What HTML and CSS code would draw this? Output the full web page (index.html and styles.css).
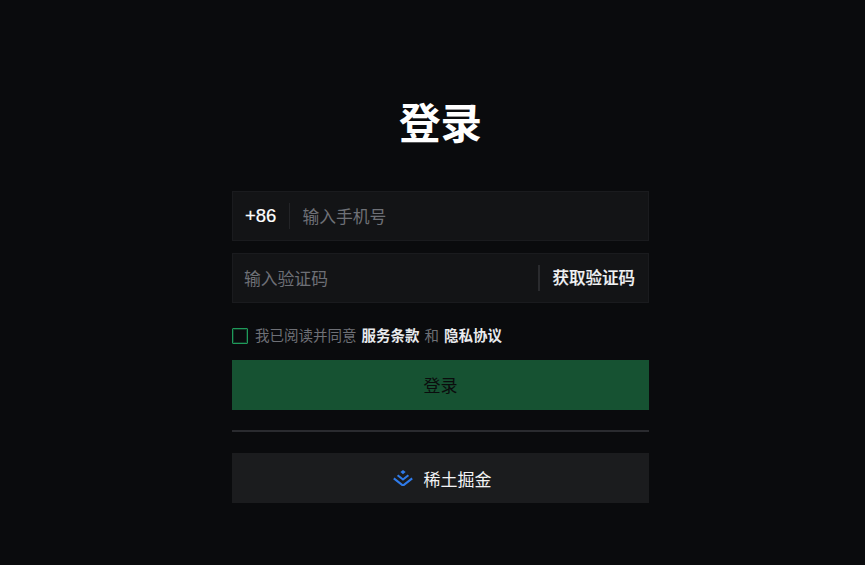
FILE: index.html
```html
<!DOCTYPE html>
<html lang="zh-CN">
<head>
    <meta charset="UTF-8">
    <meta name="viewport" content="width=device-width, initial-scale=1.0">
    <title>登录</title>
    <link rel="stylesheet" href="styles.css">
</head>
<body>
    <div class="container">
        <h1>登录</h1>
        <div class="field">
            <span class="prefix">+86</span>
            <span class="divider"></span>
            <input class="phone-input" type="text" placeholder="输入手机号">
        </div>
        <div class="field code-field">
            <input class="code-input" type="text" placeholder="输入验证码">
            <span class="divider tall"></span>
            <button class="code-button" type="button">获取验证码</button>
        </div>
        <label class="agree">
            <span class="checkbox"></span>
            <span class="agree-text">我已阅读并同意 <a href="#">服务条款</a> 和 <a href="#">隐私协议</a></span>
        </label>
        <button class="login-button" type="button">登录</button>
        <hr class="line">
        <button class="juejin-button" type="button">
            <svg class="juejin-logo" width="20" height="16" viewBox="0 0 20 16" fill="none">
                <path d="M10 0 L12.6 2.1 L10 4.2 L7.4 2.1 Z" fill="#2f7bea"/>
                <path d="M4.6 5.2 L10 9.5 L15.4 5.2" stroke="#2f7bea" stroke-width="2.1"/>
                <path d="M0.8 8.4 L10 15.6 L19.2 8.4" stroke="#2f7bea" stroke-width="2.1"/>
            </svg>
            <span>稀土掘金</span>
        </button>
    </div>
</body>
</html>
```

FILE: styles.css
```css
* {
    box-sizing: border-box;
}

body {
    margin: 0;
    height: 565px;
    overflow: hidden;
    background-color: #0a0b0d;
    font-family: "Liberation Sans", "Noto Sans CJK SC", sans-serif;
    color: #fff;
}

.container {
    width: 417px;
    margin-left: 232px;
    padding-top: 99px;
    display: flex;
    flex-direction: column;
}

h1 {
    margin: 0 0 40px;
    height: 52px;
    line-height: 52px;
    font-size: 41.5px;
    font-weight: 700;
    text-align: center;
}

.field {
    display: flex;
    align-items: center;
    height: 50px;
    margin-bottom: 12px;
    padding: 0 13px 0 12px;
    background-color: #131416;
    border: 1px solid #1a1b1e;
}

.prefix {
    margin-right: 13px;
    margin-bottom: 1px;
    font-size: 18.5px;
    font-weight: 500;
    line-height: 22px;
    -webkit-text-stroke: 0.2px #fff;
}

.divider {
    width: 1px;
    height: 26px;
    background-color: #232427;
}

.divider.tall {
    width: 2px;
    background-color: #2a2b2e;
}

input {
    flex: 1;
    min-width: 0;
    padding: 4px 0 0;
    background: transparent;
    border: none;
    outline: none;
    font-family: inherit;
    font-size: 16.8px;
    color: #fff;
}

input::placeholder {
    color: #6e7076;
    opacity: 1;
}

.phone-input {
    margin-left: 12px;
}

.code-field {
    padding-left: 11px;
}

.code-button {
    margin: 0 0 2px 13px;
    padding: 0;
    background: none;
    border: none;
    font-family: inherit;
    font-size: 16.5px;
    font-weight: 500;
    color: #f2f3f5;
    -webkit-text-stroke: 0.2px #f2f3f5;
}

.agree {
    display: flex;
    align-items: center;
    gap: 7px;
    height: 16px;
    margin: 13px 0 16px;
    font-size: 14.5px;
    color: #6e7076;
}

.agree-text {
    margin-bottom: 3px;
}

.agree a {
    margin: 0 1px;
    color: #e8eaed;
    font-weight: 700;
    text-decoration: none;
}

.checkbox {
    width: 16px;
    height: 16px;
    border: 1px solid #1f9a5a;
    border-radius: 1px;
    box-shadow: inset 0 0 0 1px rgba(31, 154, 90, 0.3);
}

.login-button {
    height: 50px;
    padding: 0 0 2px;
    background-color: #165232;
    border: none;
    font-family: inherit;
    font-size: 17px;
    color: #0b0c0d;
}

.line {
    width: 100%;
    height: 2px;
    margin: 20px 0 21px;
    border: none;
    background-color: #2a2b2f;
}

.juejin-button {
    display: flex;
    align-items: center;
    justify-content: center;
    gap: 11px;
    height: 50px;
    padding: 0 0 0 3px;
    background-color: #1b1c1e;
    border: none;
    font-family: inherit;
    font-size: 17px;
    color: #f2f3f5;
}
```
